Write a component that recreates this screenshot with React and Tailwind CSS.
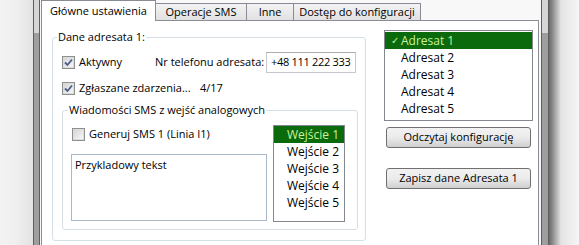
import React from "react";

const Checkbox = ({ checked }) => (
  <span className="flex h-[13px] w-[13px] shrink-0 items-center justify-center border border-[#8e8f8f] bg-white">
    <span className="flex h-[11px] w-[11px] items-center justify-center border border-[#dcdcdc] bg-gradient-to-br from-[#d6d6d6] to-[#f7f7f7]">
      {checked && (
        <svg width="9" height="9" viewBox="0 0 9 9">
          <path d="M1 4.5 L3.5 7 L8 1.5" fill="none" stroke="#4a5f8c" strokeWidth="1.8" />
        </svg>
      )}
    </span>
  </span>
);

const Tab = ({ label, active, w }) =>
  active ? (
    <div className={`relative z-10 -mb-px flex h-[21px] items-center justify-center border border-b-0 border-[#898c95] bg-white ${w}`}>
      {label}
    </div>
  ) : (
    <div className={`flex h-[17px] items-center justify-center border-t border-r border-[#898c95] bg-gradient-to-b from-[#f3f3f3] to-[#e1e1e1] ${w}`}>
      {label}
    </div>
  );

const Button = ({ children, className }) => (
  <div className={`flex h-[21px] w-[145px] items-center justify-center rounded-[3px] border border-[#707070] bg-gradient-to-b from-[#f2f2f2] via-[#ebebeb] to-[#cfcfcf] ${className}`}>
    {children}
  </div>
);

const adresaci = ["Adresat 1", "Adresat 2", "Adresat 3", "Adresat 4", "Adresat 5"];
const wejscia = ["Wejście 1", "Wejście 2", "Wejście 3", "Wejście 4", "Wejście 5"];

export default function App() {
  return (
    <div className="flex h-[245px] w-[579px] overflow-hidden whitespace-nowrap bg-[#f2f2f2] font-['Open_Sans','Noto_Sans',sans-serif] text-[11px] text-black">
      {/* left backdrop + frame */}
      <div className="w-[33px] shrink-0 bg-gradient-to-r from-[#f3f3f3] via-[#efefef] to-[#e2e2e2]" />
      <div className="flex w-[7px] shrink-0 flex-col border-x border-[#5e5e5e]">
        <div className="h-[33px] bg-[#d6d6d6]" />
        <div className="flex-1 bg-[#9e9e9e]" />
      </div>

      {/* dialog */}
      <div className="flex w-[501px] shrink-0 flex-col bg-[#f8f8f8]">
        <div className="flex h-[22px] items-end pl-[1px]">
          <Tab label="Główne ustawienia" active w="w-[115px]" />
          <Tab label="Operacje SMS" w="w-[91px]" />
          <Tab label="Inne" w="w-[47px]" />
          <Tab label="Dostęp do konfiguracji" w="w-[127px]" />
        </div>

        <div className="ml-[1px] flex h-[240px] w-[498px] shrink-0 items-start border border-[#898c95] bg-white pl-[10px]">
          {/* Dane adresata */}
          <fieldset className="mt-[8px] h-[212px] w-[314px] shrink-0 rounded-[3px] border border-[#d5dfe5]">
            <legend className="ml-[4px] px-[1px] leading-[16px]">Dane adresata 1:</legend>

            <div className="mt-[7px] flex h-[21px] items-center pl-[9px]">
              <div className="flex w-[93px] items-center gap-[4px]">
                <Checkbox checked />
                <span>Aktywny</span>
              </div>
              <span className="w-[111px]">Nr telefonu adresata:</span>
              <div className="flex h-[21px] w-[90px] items-center overflow-hidden border border-[#c5c9cf] border-t-[#abadb3] pl-[4px] tracking-[-0.3px]">
                +48 111 222 333
              </div>
            </div>

            <div className="mt-[7px] flex h-[16px] items-center pl-[9px]">
              <div className="flex w-[138px] items-center gap-[4px]">
                <Checkbox checked />
                <span>Zgłaszane zdarzenia...</span>
              </div>
              <span>4/17</span>
            </div>

            {/* Wiadomości SMS */}
            <fieldset className="ml-[9px] mt-[6px] h-[128px] w-[296px] rounded-[3px] border border-[#d5dfe5]">
              <legend className="ml-[5px] px-[1px] leading-[16px]">Wiadomości SMS z wejść analogowych</legend>
              <div className="flex items-start gap-[6px] pl-[8px]">
                <div className="w-[196px]">
                  <div className="mt-[10px] flex h-[13px] items-center gap-[4px] pl-[1px]">
                    <Checkbox />
                    <span>Generuj SMS 1 (Linia I1)</span>
                  </div>
                  <div className="mt-[13px] h-[67px] border border-[#a9b8c9] px-[3px] pt-[2px]">
                    Przykladowy tekst
                  </div>
                </div>
                <div className="mt-[7px] h-[97px] w-[72px] border border-[#828790] bg-white text-[12px]">
                  {wejscia.map((w, i) => (
                    <div
                      key={w}
                      className={`flex h-[17px] items-center justify-end pr-[5px] ${
                        i === 0 ? "bg-[#0b6a0b] text-[#c9f29b]" : ""
                      }`}
                    >
                      {w}
                    </div>
                  ))}
                </div>
              </div>
            </fieldset>
          </fieldset>

          {/* right column */}
          <div className="ml-[18px] mt-[9px] w-[149px] shrink-0">
            <div className="h-[91px] border border-[#828790] bg-white pt-[1px] text-[12px]">
              {adresaci.map((a, i) => (
                <div
                  key={a}
                  className={`flex h-[17px] items-center pl-[6px] ${
                    i === 0 ? "bg-[#0b6a0b] text-[#c9f29b]" : ""
                  }`}
                >
                  <span className="w-[10px] text-[10px]">{i === 0 ? "✓" : ""}</span>
                  {a}
                </div>
              ))}
            </div>
            <Button className="ml-[2px] mt-[6px]">Odczytaj konfigurację</Button>
            <Button className="ml-[2px] mt-[20px]">Zapisz dane Adresata 1</Button>
          </div>
        </div>
      </div>

      {/* right frame + shadow */}
      <div className="flex w-[8px] shrink-0 flex-col border-x border-[#5e5e5e]">
        <div className="h-[33px] bg-[#d6d6d6]" />
        <div className="flex-1 bg-[#9e9e9e]" />
      </div>
      <div className="flex-1 bg-gradient-to-r from-[#6a6a6a] via-[#e4e4e4] via-40% to-[#f5f5f5]" />
    </div>
  );
}
